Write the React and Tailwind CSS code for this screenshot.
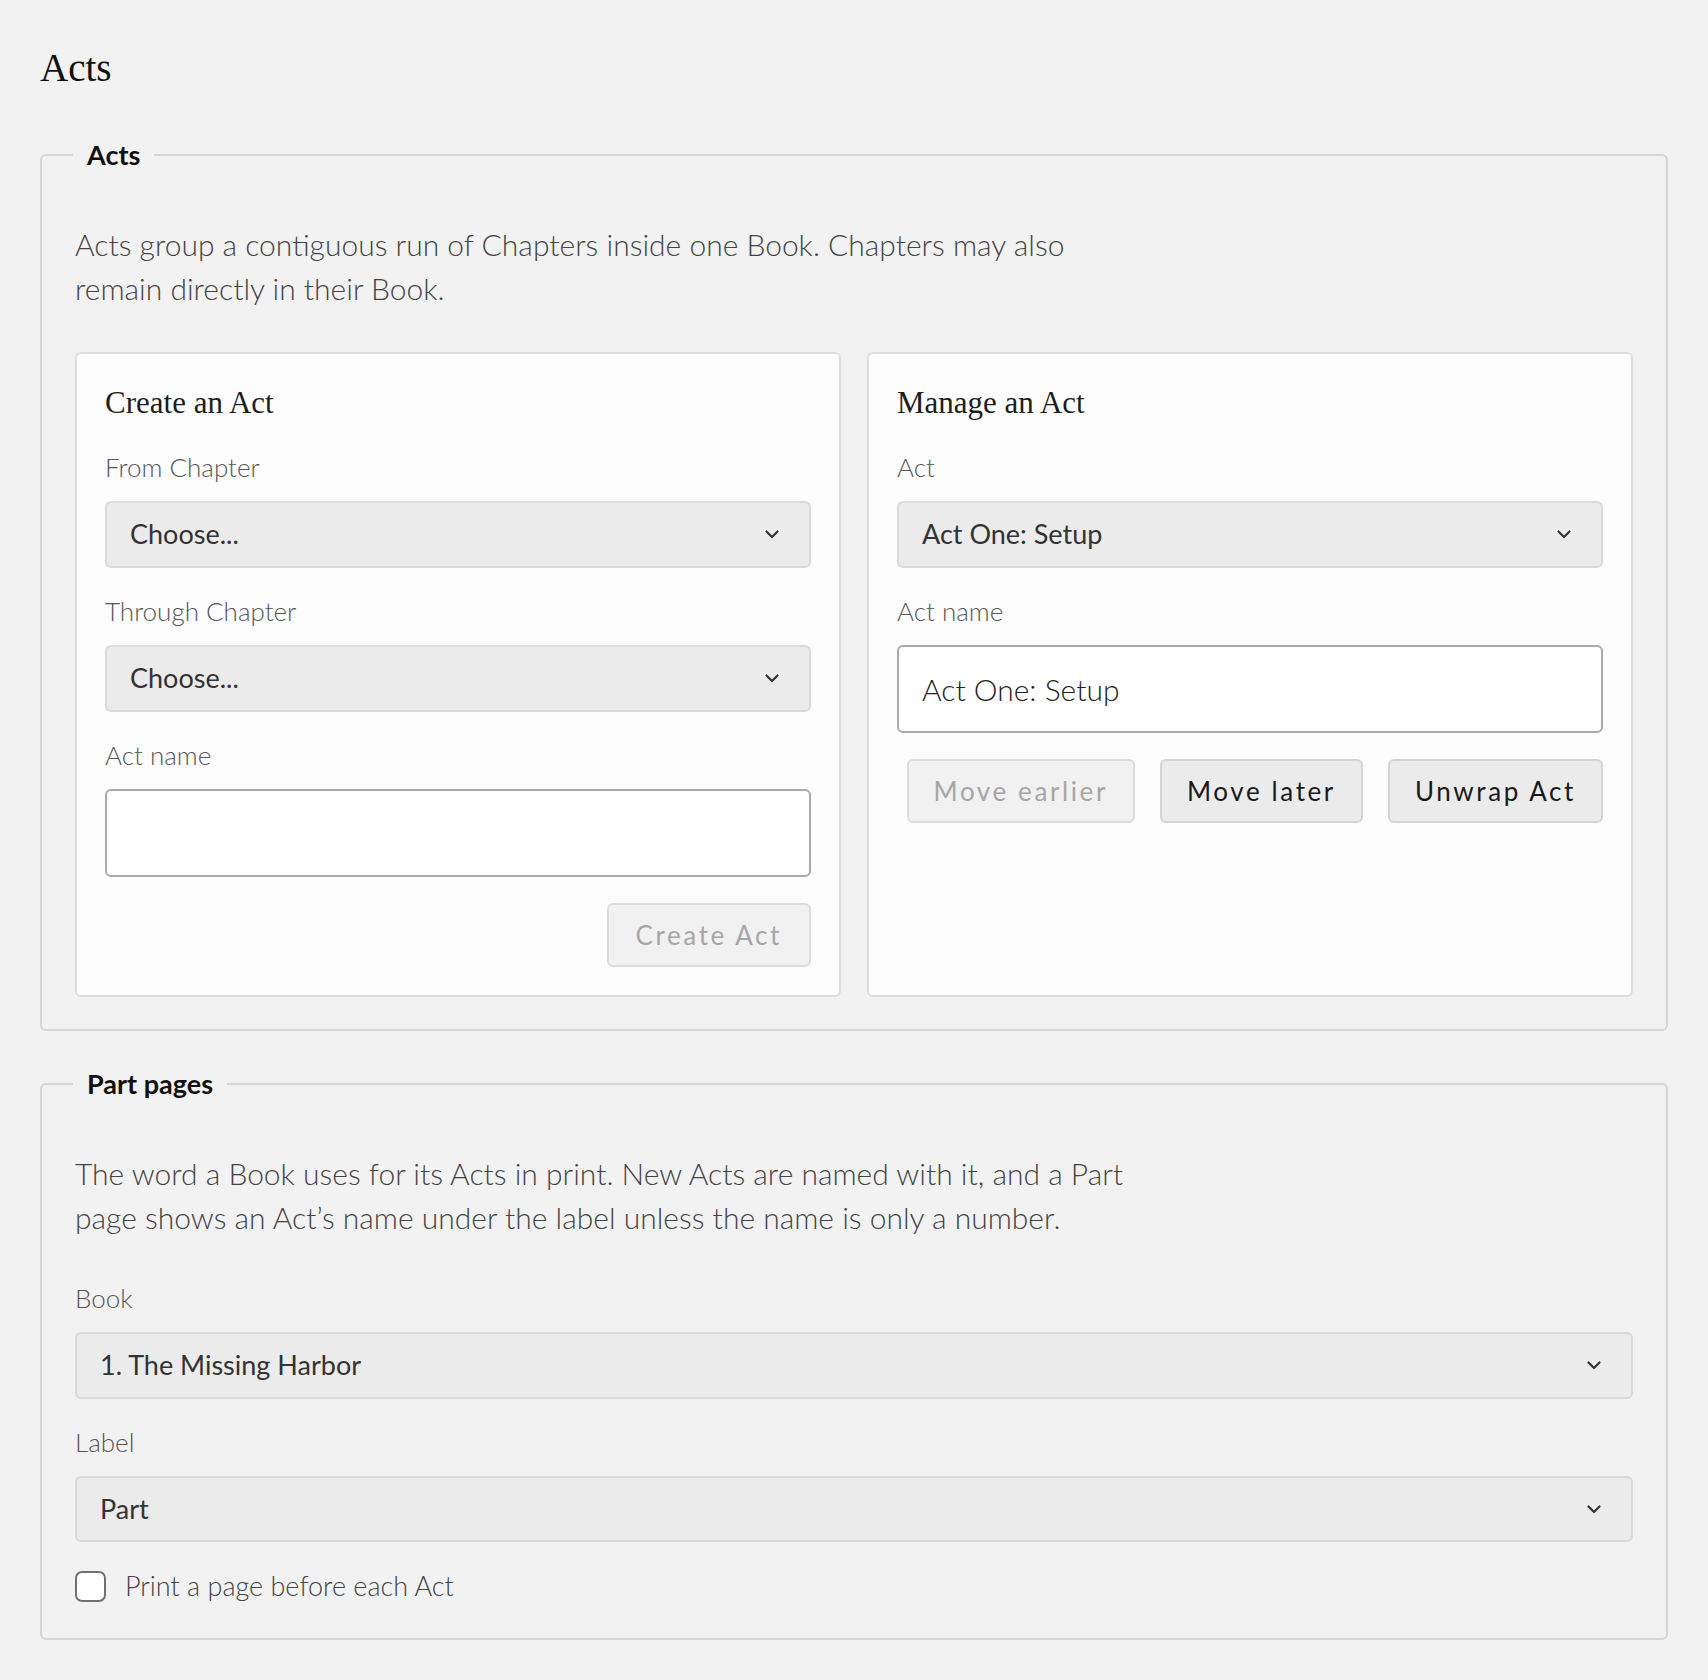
import React from 'react';

const sans = "font-['Lato',sans-serif]";
const serif = "font-['Liberation_Serif',serif]";

function Chevron() {
  return (
    <svg width="14" height="9" viewBox="0 0 14 9" fill="none" className="shrink-0">
      <path d="M1.5 1.5 L7 7 L12.5 1.5" stroke="#333" strokeWidth="2.2" strokeLinecap="round" strokeLinejoin="round" />
    </svg>
  );
}

function SelectBox({ value, tall }) {
  return (
    <div className={`flex items-center justify-between rounded-[6px] border-2 border-[#d9d9d9] bg-[#ebebeb] pl-[23px] pr-[30px] ${tall ? 'h-[67px]' : 'h-[66px]'}`}>
      <span className="text-[27px] text-[#333]">{value}</span>
      <Chevron />
    </div>
  );
}

function TextBox({ value }) {
  return (
    <div className="flex h-[88px] items-center rounded-[6px] border-2 border-[#a9a9a9] bg-white px-[23px]">
      <span className="text-[30px] font-light text-[#222]">{value}</span>
    </div>
  );
}

function Field({ label, children }) {
  return (
    <div className="flex flex-col gap-[14px]">
      <label className="text-[26px] font-light leading-[40px] text-[#555]">{label}</label>
      {children}
    </div>
  );
}

function Btn({ children, disabled, className = '' }) {
  return (
    <button
      className={
        disabled
          ? `h-[64px] rounded-[6px] border-2 border-[#dcdcdc] bg-[#f1f1f1] text-[26px] tracking-[0.1em] text-[#a6a6a6] ${className}`
          : `h-[64px] rounded-[6px] border-2 border-[#d4d4d4] bg-[#ebebeb] text-[26px] tracking-[0.1em] text-[#1a1a1a] ${className}`
      }
    >
      {children}
    </button>
  );
}

function Card({ title, children }) {
  return (
    <div className="flex flex-col rounded-[6px] border-2 border-[#dedede] bg-[#fdfdfd] px-[28px] pb-[28px] pt-[29px]">
      <h3 className={`${serif} text-[31px] leading-[40px] text-[#1e1e1e]`}>{title}</h3>
      {children}
    </div>
  );
}

function Section({ legend, children }) {
  return (
    <fieldset className="rounded-[6px] border-2 border-[#d6d6d6] px-[33px] pb-[32px] pt-[50px]">
      <legend className="-ml-[2px] px-[14px] text-[27px] font-bold leading-[34px] text-[#111]">{legend}</legend>
      {children}
    </fieldset>
  );
}

export default function App() {
  return (
    <div className={`${sans} min-h-[1680px] bg-[#f2f2f2] px-[40px] pb-[43px] pt-[44px]`}>
      <h1 className={`${serif} text-[39px] leading-[48px] text-[#111]`}>Acts</h1>

      <div className="mt-[46px]">
        <Section legend="Acts">
          <p className="max-w-[1075px] text-[30px] font-light leading-[44px] text-[#444]">
            Acts group a contiguous run of Chapters inside one Book. Chapters may also remain directly in their Book.
          </p>

          <div className="mt-[42px] grid grid-cols-2 gap-[26px]">
            <Card title="Create an Act">
              <div className="mt-[24px] flex flex-col gap-[23px]">
                <Field label="From Chapter">
                  <SelectBox value="Choose..." tall />
                </Field>
                <Field label="Through Chapter">
                  <SelectBox value="Choose..." tall />
                </Field>
                <Field label="Act name">
                  <div className="h-[88px] rounded-[6px] border-2 border-[#a9a9a9] bg-white" />
                </Field>
              </div>
              <div className="mt-[26px] flex justify-end">
                <Btn disabled className="h-[62px] px-[27px]">Create Act</Btn>
              </div>
            </Card>

            <Card title="Manage an Act">
              <div className="mt-[24px] flex flex-col gap-[23px]">
                <Field label="Act">
                  <SelectBox value="Act One: Setup" tall />
                </Field>
                <Field label="Act name">
                  <TextBox value="Act One: Setup" />
                </Field>
              </div>
              <div className="mt-[26px] flex justify-end gap-[25px]">
                <Btn disabled className="px-[25px]">Move earlier</Btn>
                <Btn className="px-[25px]">Move later</Btn>
                <Btn className="px-[25px]">Unwrap Act</Btn>
              </div>
            </Card>
          </div>
        </Section>
      </div>

      <div className="mt-[36px]">
        <Section legend="Part pages">
          <p className="max-w-[1075px] text-[30px] font-light leading-[44px] text-[#444]">
            The word a Book uses for its Acts in print. New Acts are named with it, and a Part page shows an Act’s name under the label unless the name is only a number.
          </p>

          <div className="mt-[39px] flex flex-col gap-[23px]">
            <Field label="Book">
              <SelectBox value="1. The Missing Harbor" tall />
            </Field>
            <Field label="Label">
              <SelectBox value="Part" />
            </Field>
          </div>

          <label className="mt-[24px] flex items-center gap-[19px]">
            <span className="h-[31px] w-[31px] rounded-[7px] border-2 border-[#707070] bg-white" />
            <span className="text-[27px] font-light leading-[40px] text-[#444]">Print a page before each Act</span>
          </label>
        </Section>
      </div>
    </div>
  );
}
